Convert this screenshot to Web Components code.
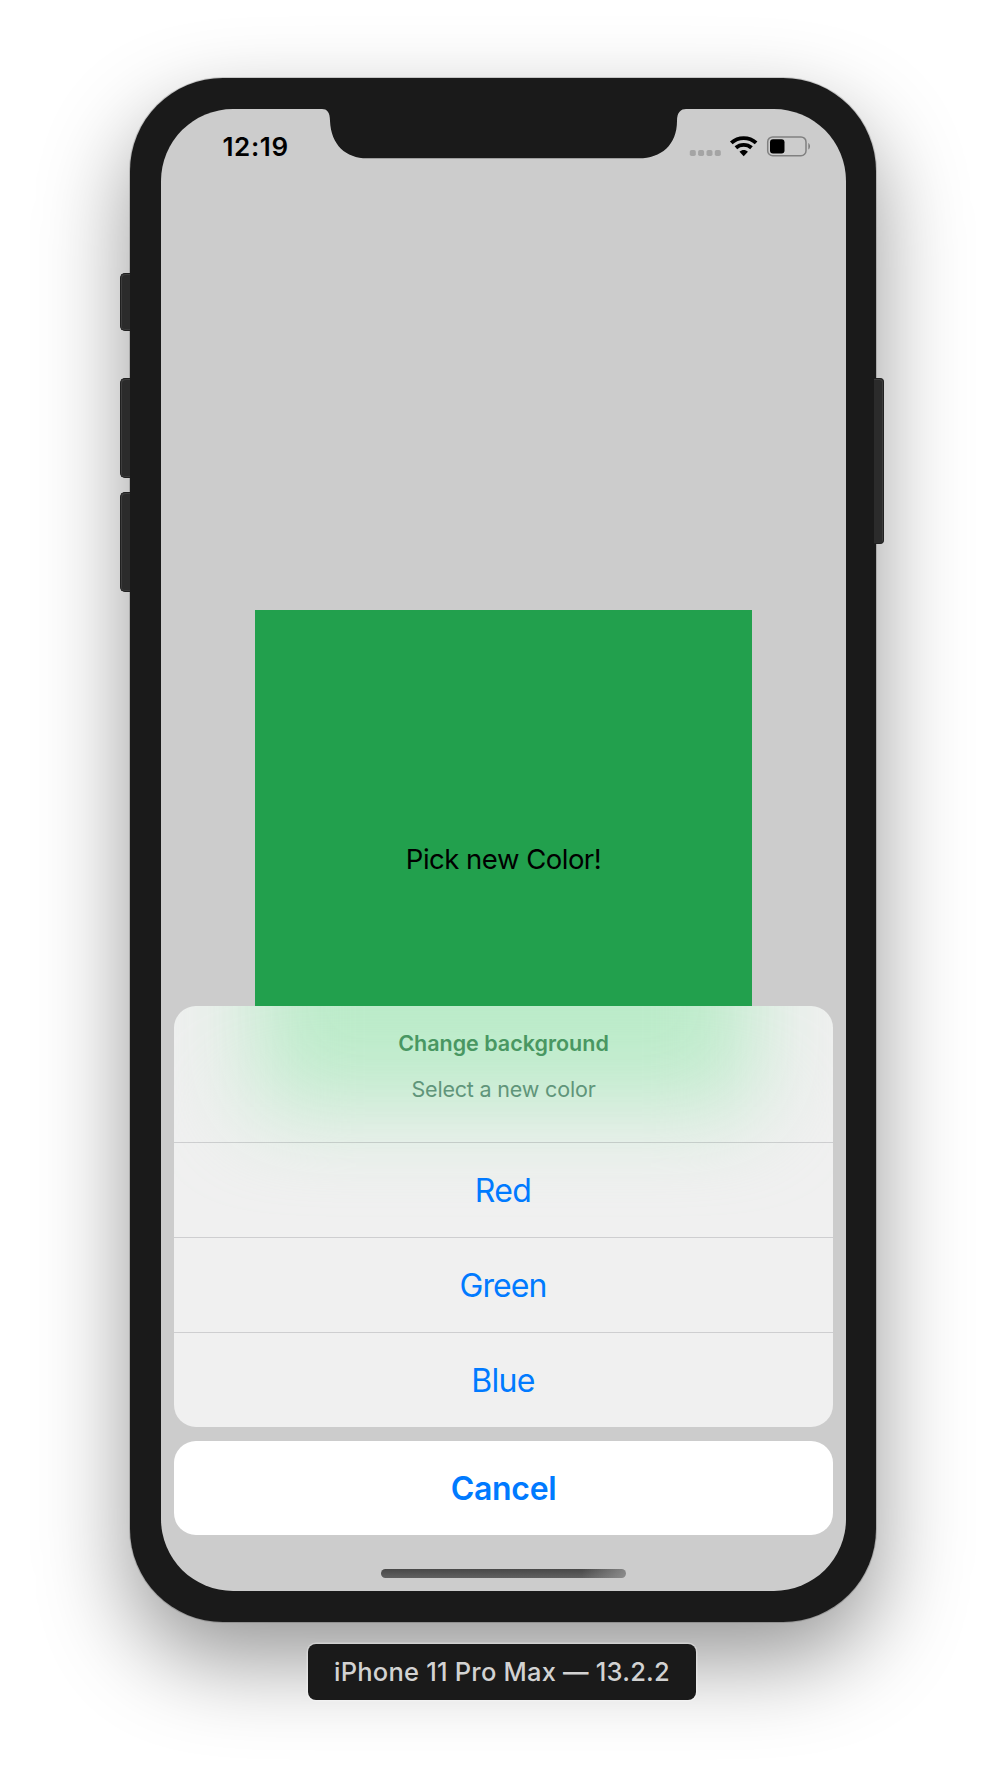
<!DOCTYPE html>
<html lang="en">
<head>
<meta charset="utf-8">
<title>iPhone 11 Pro Max — 13.2.2</title>
<style>
html,body{margin:0;padding:0;background:#fff}
body{width:1006px;height:1772px;overflow:hidden;font-family:Inter,"Liberation Sans",sans-serif;-webkit-font-smoothing:antialiased}
</style>
</head>
<body>
<simulator-window>
  <device-frame>
    <status-bar slot="status" time="12:19"></status-bar>
    <color-card slot="card">Pick new Color!</color-card>
    <action-sheet slot="sheet">
      <span slot="title">Change background</span>
      <span slot="message">Select a new color</span>
      <sheet-action style="--track:-.6px">Red</sheet-action>
      <sheet-action style="--track:-.9px">Green</sheet-action>
      <sheet-action style="--track:-.7px">Blue</sheet-action>
    </action-sheet>
    <cancel-button slot="cancel">Cancel</cancel-button>
  </device-frame>
  <device-label slot="label">iPhone 11 Pro Max — 13.2.2</device-label>
</simulator-window>
<script>
function define(name, html, init) {
  const template = document.createElement('template');
  template.innerHTML = html;
  customElements.define(name, class extends HTMLElement {
    constructor() {
      super();
      this.attachShadow({mode: 'open'}).append(template.content.cloneNode(true));
    }
    connectedCallback() { if (init) init(this); }
  });
}

define('simulator-window', `<style>
:host{display:flex;flex-direction:column;align-items:center;width:1006px;height:1772px;box-sizing:border-box;padding-top:78px}
</style><slot></slot><slot name="label"></slot>`);

define('device-frame', `<style>
:host{display:block;position:relative;width:746px;height:1544px;box-sizing:border-box;padding:31px 30px 31px 31px;border-radius:93px;background:#1a1a1a;box-shadow:0 0 0 1px rgba(0,0,0,.16),0 38px 90px rgba(0,0,0,.41)}
.screen{display:flex;flex-direction:column;align-items:center;width:685px;height:1482px;border-radius:72px;background:#ccc;overflow:hidden;position:relative}
.notch{position:absolute;left:159px;top:0}
.key{position:absolute;box-sizing:border-box;background:#2b2b2b;border:1px solid #202020;box-shadow:inset 1px 1px 0 #3d3d3d,inset 0 -1px 0 #3a3a3a}
.l{left:-10.500px;width:10.500px;border-right:0;border-radius:5px 0 0 5px}
.r{right:-8px;width:10px;border-left:0;border-radius:0 4px 4px 0;box-shadow:inset -1px 1px 0 #3d3d3d}
.home{width:245px;height:9px;margin-top:34px;border-radius:5px;background:linear-gradient(90deg,transparent 82%,rgba(165,165,165,.65)),linear-gradient(#484848,#606060);flex:none}
</style>
<i class="key l" style="top:195px;height:58px"></i>
<i class="key l" style="top:300px;height:100px"></i>
<i class="key l" style="top:414px;height:100px"></i>
<i class="key r" style="top:300px;height:166px"></i>
<div class="screen">
<svg class="notch" width="367" height="50" viewBox="0 0 367 50"><path fill="#1a1a1a" d="M0 0H2C7 0 10 3 10 12C11 36 26 49.300 47 49.300H319C341 49.300 357 36 357 12C357 3 361 0 366 0Z"/></svg>
<slot name="status"></slot><slot name="card"></slot><slot name="sheet"></slot><slot name="cancel"></slot>
<div class="home"></div></div>`);

define('status-bar', `<style>
:host{display:flex;align-items:center;width:685px;height:76px;box-sizing:border-box;padding:0 36.500px 0 61.500px;flex:none;font-size:26px;font-weight:600;color:#000}
time{flex:1;line-height:32px;letter-spacing:.6px}
svg{display:block}
</style><time></time>
<svg width="121" height="24" viewBox="0 0 121 24">
<g fill="#a4a4a4"><rect x=".8" y="15" width="6" height="6" rx="1.800"/><rect x="9.100" y="15" width="6" height="6" rx="1.800"/><rect x="17.500" y="15" width="6" height="6" rx="1.800"/><rect x="25.800" y="15" width="6" height="6" rx="1.800"/></g>
<g fill="none" stroke="#000" stroke-width="3.900"><path d="M42.300 7.900C49.300 1.500 60.100 1.500 67.100 7.900"/><path d="M46.900 12.800C51.300 8.900 58.100 8.900 62.500 12.800"/></g>
<path d="M50.500 16.700C53 14.400 56.600 14.400 58.900 16.700L54.700 21.200Z"/>
<rect x="78.700" y="1.900" width="38.300" height="18.800" rx="5" fill="none" stroke="#808080" stroke-width="1.500"/>
<rect x="81" y="4.200" width="14.500" height="14.200" rx="3"/>
<path fill="#808080" d="M119.300 7.900C121.600 9.100 121.600 13.300 119.300 14.500Z"/>
</svg>`, host => host.shadowRoot.querySelector('time').textContent = host.getAttribute('time'));

define('color-card', `<style>
:host{display:flex;align-items:center;justify-content:center;width:497px;height:497px;margin-top:425px;flex:none;background:#22a04d;font-size:27.500px;letter-spacing:-.5px;color:#000}
</style><span><slot></slot></span>`);

define('action-sheet', `<style>
:host{display:block;position:relative;width:659px;height:421.500px;margin-top:-101.500px;flex:none;border-radius:22px;background:#f0f0f0;overflow:hidden;text-align:center}
.glow{position:absolute;left:81px;top:-200px;width:497px;height:301px;background:#bbebc9;filter:blur(46px)}
header{position:relative;display:flex;flex-direction:column;height:136px;box-sizing:border-box;padding-top:24px;gap:20px}
.title{font-size:21.500px;line-height:26px;font-weight:600;color:#499762}
.message{font-size:21.500px;line-height:26px;letter-spacing:-.18px;color:#60957a}
.actions{position:relative;display:flex;flex-direction:column}
</style><div class="glow"></div><header><div class="title"><slot name="title"></slot></div><div class="message"><slot name="message"></slot></div></header><div class="actions"><slot></slot></div>`);

define('sheet-action', `<style>
:host{display:flex;align-items:center;justify-content:center;height:95px;box-sizing:border-box;padding:1px 1px 0 0;border-top:1.500px solid rgba(60,60,67,.19);font-size:32px;letter-spacing:var(--track,0);color:#007aff}
</style><span><slot></slot></span>`);

define('cancel-button', `<style>
:host{display:flex;align-items:center;justify-content:center;width:659px;height:94px;box-sizing:border-box;padding-top:1px;margin-top:14px;flex:none;border-radius:22px;background:#fff;font-size:32px;font-weight:600;letter-spacing:-.3px;color:#007aff}
</style><span><slot></slot></span>`);

define('device-label', `<style>
:host{display:flex;align-items:center;justify-content:center;position:relative;width:388px;height:56px;box-sizing:border-box;padding-bottom:2px;margin-top:22px;margin-right:2px;border-radius:8px;background:#1a1a1a;box-shadow:0 0 0 1.500px rgba(255,255,255,.3);font-size:25.500px;font-weight:500;letter-spacing:.21px;color:#d2d2d2;white-space:nowrap}
</style><span><slot></slot></span>`);
</script>
</body>
</html>
